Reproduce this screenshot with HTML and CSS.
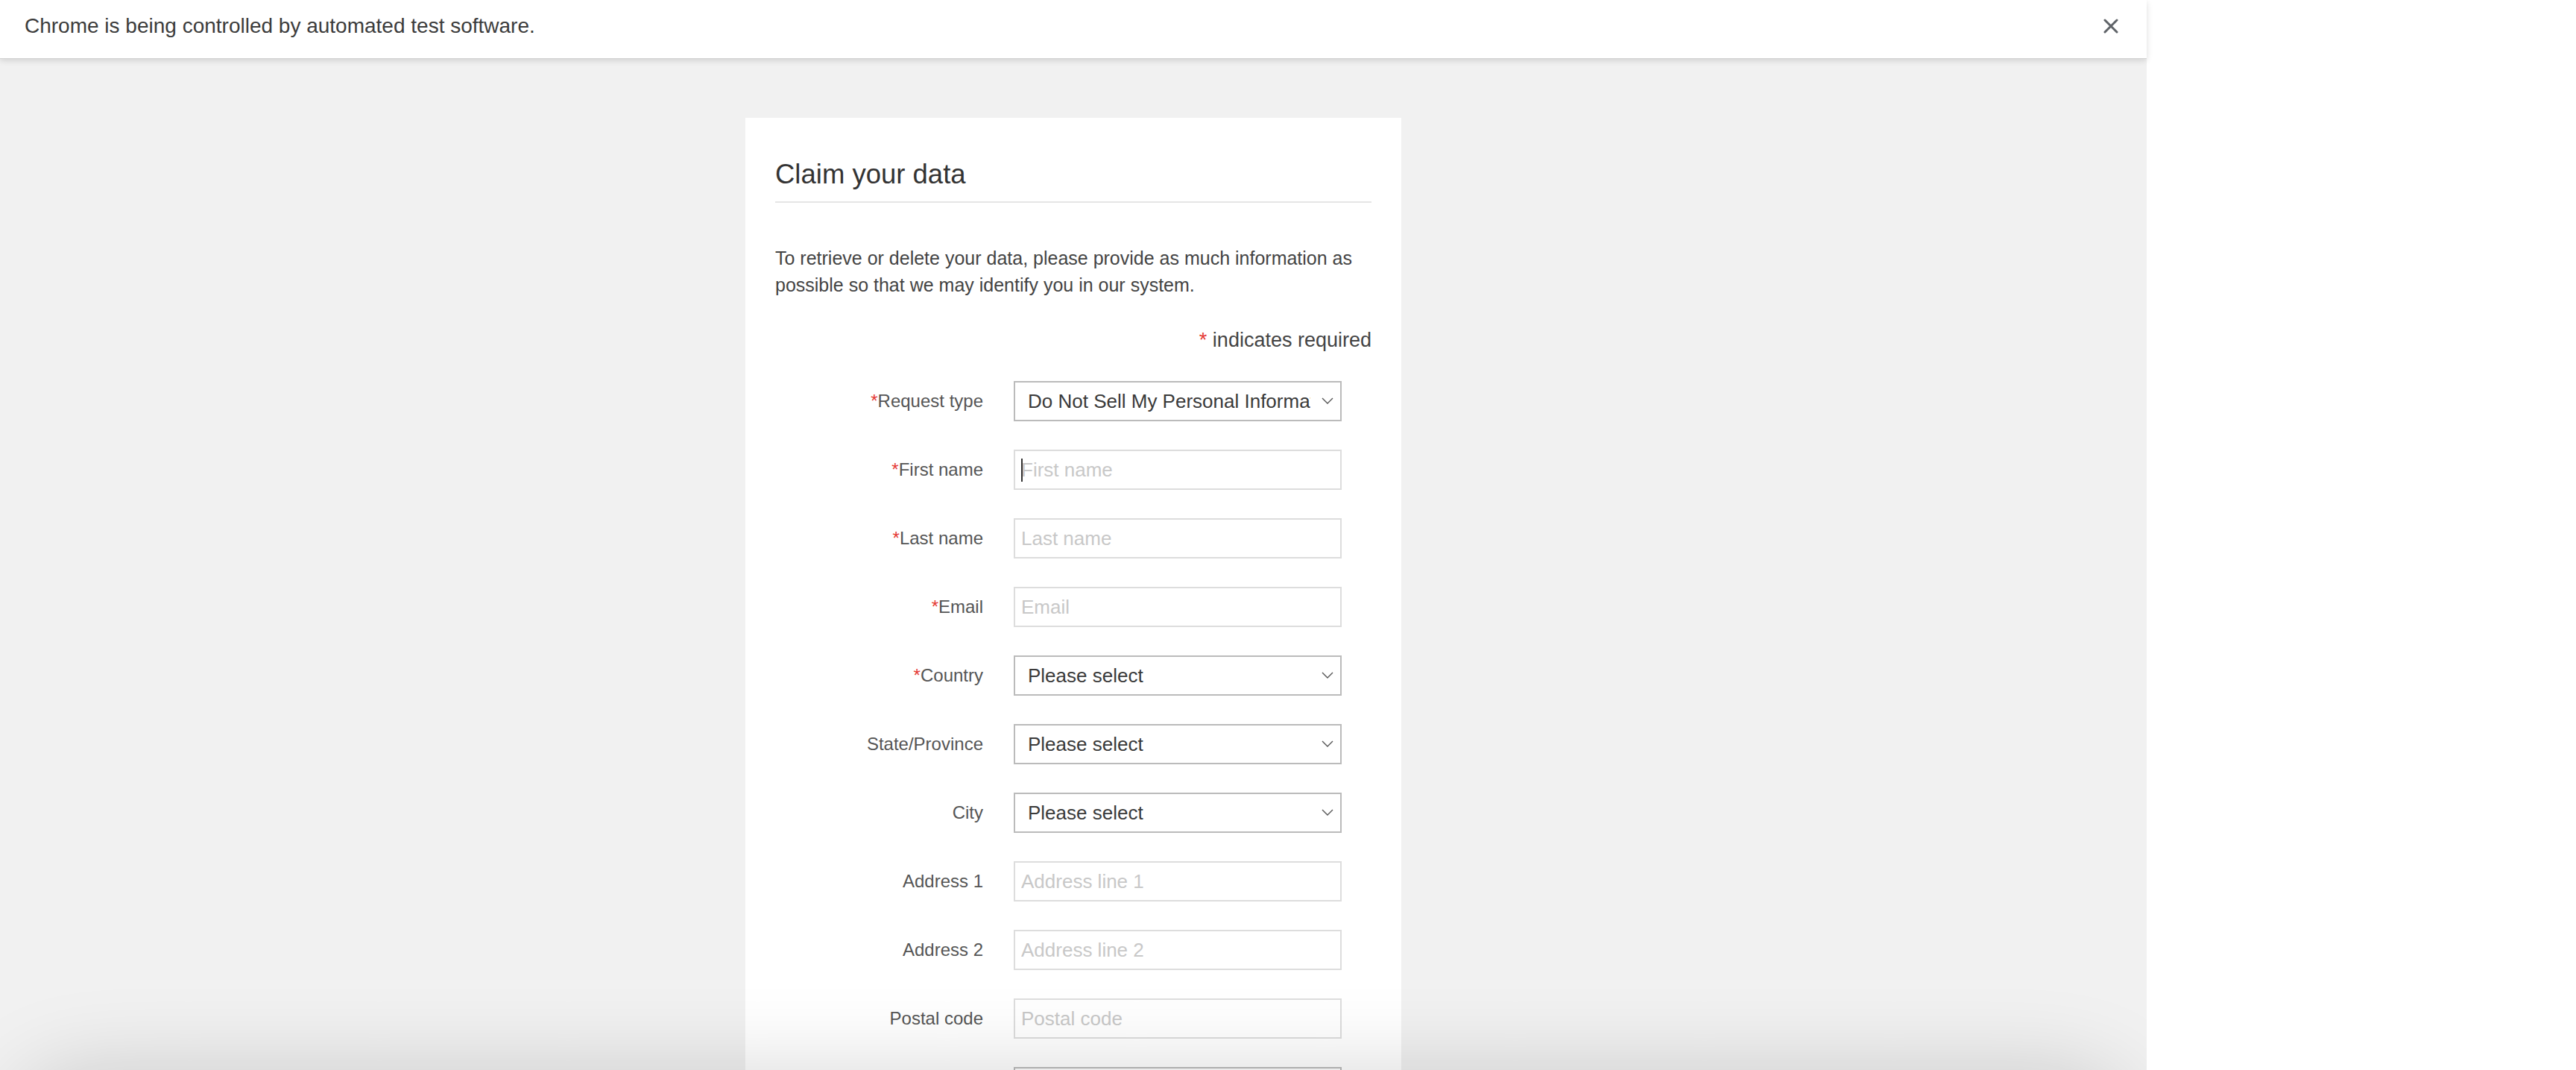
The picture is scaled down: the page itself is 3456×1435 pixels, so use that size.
FILE: index.html
```html
<!DOCTYPE html>
<html lang="en">
<head>
<meta charset="utf-8">
<title>Claim your data</title>
<link rel="stylesheet" href="styles.css">
</head>
<body>
<div class="window">
  <div class="infobar">
    <span class="infobar-text">Chrome is being controlled by automated test software.</span>
    <button class="infobar-close" type="button" aria-label="Close">
      <svg width="20" height="20" viewBox="0 0 20 20"><path d="M2 2 L18 18 M18 2 L2 18" stroke="#5f6368" stroke-width="3" stroke-linecap="round" fill="none"/></svg>
    </button>
  </div>
  <div class="viewport">
    <main class="card">
      <h1 class="card-title">Claim your data</h1>
      <p class="intro">To retrieve or delete your data, please provide as much information as possible so that we may identify you in our system.</p>
      <p class="required-note"><span class="req">*</span> indicates required</p>
      <form class="form">
        <div class="row">
          <label class="label"><span class="req">*</span>Request type</label>
          <div class="control">
            <select class="select"><option>Do Not Sell My Personal Information</option></select>
            <svg class="chevron" width="16" height="9" viewBox="0 0 16 9"><path d="M1 1 L8 8 L15 1" stroke="#555" stroke-width="1.4" fill="none"/></svg>
          </div>
        </div>
        <div class="row">
          <label class="label"><span class="req">*</span>First name</label>
          <div class="control">
            <input class="input" type="text" placeholder="First name">
            <span class="caret"></span>
          </div>
        </div>
        <div class="row">
          <label class="label"><span class="req">*</span>Last name</label>
          <div class="control"><input class="input" type="text" placeholder="Last name"></div>
        </div>
        <div class="row">
          <label class="label"><span class="req">*</span>Email</label>
          <div class="control"><input class="input" type="text" placeholder="Email"></div>
        </div>
        <div class="row">
          <label class="label"><span class="req">*</span>Country</label>
          <div class="control">
            <select class="select"><option>Please select</option></select>
            <svg class="chevron" width="16" height="9" viewBox="0 0 16 9"><path d="M1 1 L8 8 L15 1" stroke="#555" stroke-width="1.4" fill="none"/></svg>
          </div>
        </div>
        <div class="row">
          <label class="label">State/Province</label>
          <div class="control">
            <select class="select"><option>Please select</option></select>
            <svg class="chevron" width="16" height="9" viewBox="0 0 16 9"><path d="M1 1 L8 8 L15 1" stroke="#555" stroke-width="1.4" fill="none"/></svg>
          </div>
        </div>
        <div class="row">
          <label class="label">City</label>
          <div class="control">
            <select class="select"><option>Please select</option></select>
            <svg class="chevron" width="16" height="9" viewBox="0 0 16 9"><path d="M1 1 L8 8 L15 1" stroke="#555" stroke-width="1.4" fill="none"/></svg>
          </div>
        </div>
        <div class="row">
          <label class="label">Address 1</label>
          <div class="control"><input class="input" type="text" placeholder="Address line 1"></div>
        </div>
        <div class="row">
          <label class="label">Address 2</label>
          <div class="control"><input class="input" type="text" placeholder="Address line 2"></div>
        </div>
        <div class="row">
          <label class="label">Postal code</label>
          <div class="control"><input class="input" type="text" placeholder="Postal code"></div>
        </div>
        <div class="row">
          <span class="label"></span>
          <div class="control">
            <div class="select select-stub"></div>
          </div>
        </div>
      </form>
    </main>
    <div class="sheet-shadow"></div>
  </div>
</div>
</body>
</html>
```

FILE: styles.css
```css
html, body {
  margin: 0;
  padding: 0;
  background: #ffffff;
  font-family: "Liberation Sans", Arial, sans-serif;
}

.window {
  width: 2880px;
  height: 1435px;
  display: flex;
  flex-direction: column;
}

.infobar {
  flex: none;
  height: 78px;
  box-sizing: border-box;
  display: flex;
  align-items: center;
  justify-content: space-between;
  padding: 0 36px 0 33px;
  background: #ffffff;
  position: relative;
  z-index: 2;
  box-shadow: 0 1px 0 #d2d2d2, 0 3px 8px rgba(0, 0, 0, 0.14);
}

.infobar-text {
  font-size: 28px;
  color: #3c3c3c;
  margin-top: -8px;
}

.infobar-close {
  border: 0;
  background: transparent;
  padding: 0;
  margin-top: -8px;
  display: flex;
  align-items: center;
  justify-content: center;
  width: 24px;
  height: 24px;
}

.viewport {
  flex: 1;
  background: #f1f1f1;
  position: relative;
  overflow: hidden;
}

.card {
  width: 880px;
  box-sizing: border-box;
  margin: 80px auto 0;
  background: #ffffff;
  padding: 54px 40px 40px;
}

.card-title {
  margin: 0;
  font-size: 36.5px;
  font-weight: normal;
  line-height: 43px;
  color: #333333;
  padding-bottom: 15px;
  border-bottom: 2px solid #e5e5e5;
}

.intro {
  margin: 56px 0 0;
  font-size: 25px;
  line-height: 36px;
  color: #444444;
}

.required-note {
  margin: 38px 0 0;
  text-align: right;
  font-size: 27px;
  line-height: 36px;
  color: #444444;
}

.req {
  color: #e53a35;
}

.form {
  margin-top: 37px;
  display: flex;
  flex-direction: column;
  gap: 38px;
}

.row {
  display: flex;
  align-items: center;
  gap: 41px;
}

.label {
  flex: none;
  width: 279px;
  text-align: right;
  font-size: 24px;
  color: #555555;
}

.control {
  flex: none;
  width: 440px;
  height: 54px;
  position: relative;
}

.input,
.select {
  display: block;
  width: 100%;
  height: 100%;
  box-sizing: border-box;
  margin: 0;
  font-family: "Liberation Sans", Arial, sans-serif;
  font-size: 26px;
  color: #3a3a3a;
  background: #ffffff;
  border: 2px solid #dddddd;
  border-radius: 0;
  outline: none;
  padding: 0 8px;
}

.input::placeholder {
  color: #c8c8c8;
}

.select {
  -webkit-appearance: none;
  appearance: none;
  border-color: #bbbbbb;
  padding: 0 40px 0 17px;
}

.chevron {
  position: absolute;
  right: 11px;
  top: 22px;
  pointer-events: none;
}

.caret {
  position: absolute;
  left: 10px;
  top: 12px;
  width: 2px;
  height: 31px;
  background: #333333;
}

.sheet-shadow {
  position: absolute;
  left: 20px;
  right: 20px;
  top: 1364px;
  height: 300px;
  border-radius: 90px;
  background: #f1f1f1;
  box-shadow: 0 0 120px rgba(0, 0, 0, 0.18);
}
```
